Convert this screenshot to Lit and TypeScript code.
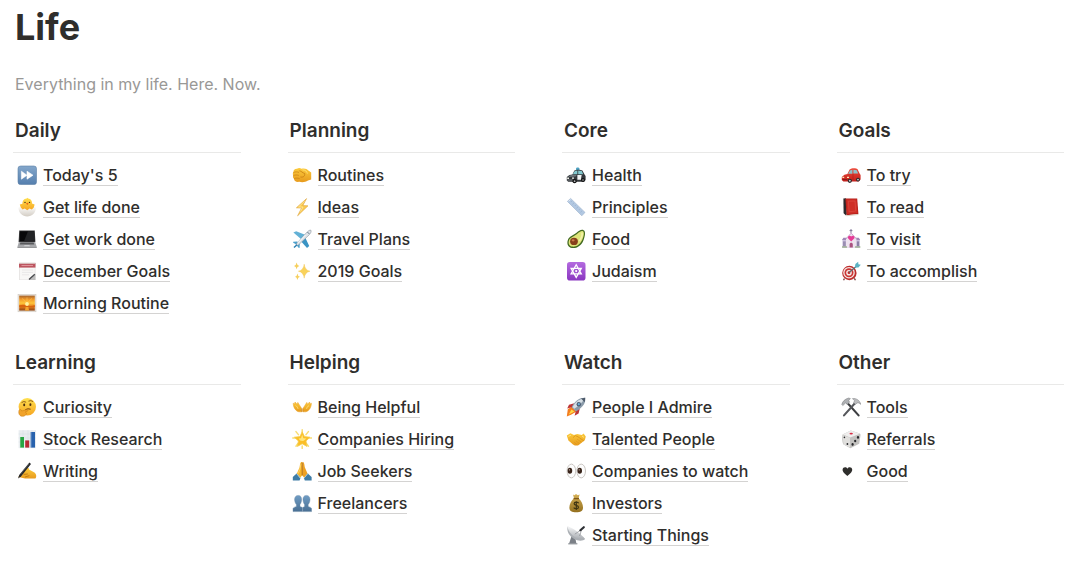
import { LitElement, html, svg, css, type SVGTemplateResult } from "lit";
import { customElement } from "lit/decorators.js";

type Entry = { icon: string; label: string };
type Section = { title: string; entries: Entry[] };

const SECTIONS: Section[] = [
  { title: "Daily", entries: [
    { icon: "forward", label: "Today's 5" },
    { icon: "chick", label: "Get life done" },
    { icon: "laptop", label: "Get work done" },
    { icon: "calendar", label: "December Goals" },
    { icon: "sunrise", label: "Morning Routine" },
  ] },
  { title: "Planning", entries: [
    { icon: "fist", label: "Routines" },
    { icon: "bolt", label: "Ideas" },
    { icon: "plane", label: "Travel Plans" },
    { icon: "sparkles", label: "2019 Goals" },
  ] },
  { title: "Core", entries: [
    { icon: "police", label: "Health" },
    { icon: "ruler", label: "Principles" },
    { icon: "avocado", label: "Food" },
    { icon: "hexagram", label: "Judaism" },
  ] },
  { title: "Goals", entries: [
    { icon: "car", label: "To try" },
    { icon: "book", label: "To read" },
    { icon: "chapel", label: "To visit" },
    { icon: "target", label: "To accomplish" },
  ] },
  { title: "Learning", entries: [
    { icon: "thinking", label: "Curiosity" },
    { icon: "chart", label: "Stock Research" },
    { icon: "writing", label: "Writing" },
  ] },
  { title: "Helping", entries: [
    { icon: "openHands", label: "Being Helpful" },
    { icon: "star", label: "Companies Hiring" },
    { icon: "pray", label: "Job Seekers" },
    { icon: "people", label: "Freelancers" },
  ] },
  { title: "Watch", entries: [
    { icon: "rocket", label: "People I Admire" },
    { icon: "handshake", label: "Talented People" },
    { icon: "eyes", label: "Companies to watch" },
    { icon: "money", label: "Investors" },
    { icon: "dish", label: "Starting Things" },
  ] },
  { title: "Other", entries: [
    { icon: "tools", label: "Tools" },
    { icon: "die", label: "Referrals" },
    { icon: "heart", label: "Good" },
  ] },
];

const gradient = (id: string, ...stops: string[]) => svg`
  <linearGradient id=${id} x1="0" y1="0" x2="0" y2="1">
    ${stops.map((c, i) => svg`<stop offset=${i / (stops.length - 1)} stop-color=${c}></stop>`)}
  </linearGradient>`;

const GRADIENTS = [
  gradient("g-blue", "#84a7cb", "#557fae"),
  gradient("g-yellow", "#ffe04f", "#f6a623"),
  gradient("g-skin", "#fccb3c", "#e79a1d"),
  gradient("g-shell", "#ffffff", "#d3cdc4"),
  gradient("g-sky", "#a5642f", "#f29a2a", "#ffc53a", "#e2781b", "#8d4716"),
  gradient("g-purple", "#b46be0", "#8a36c0"),
  gradient("g-red", "#ef4a3a", "#c2201c"),
  gradient("g-head", "#6f9cc4", "#496f93"),
  gradient("g-metal", "#f5f6f7", "#a9adb2"),
  gradient("g-bag", "#d6b156", "#94701f"),
];

const ICONS: Record<string, SVGTemplateResult> = {
  forward: svg`
    <rect x="1" y="1" width="18.5" height="18.5" rx="2.6" fill="url(#g-blue)" stroke="#5d7fa6" stroke-width=".6"/>
    <path d="M4.4 6.2 10 10.2 4.4 14.2ZM10 6.2 16 10.2 10 14.2Z" fill="#fff" stroke="#fff" stroke-width=".6" stroke-linejoin="round"/>`,
  chick: svg`
    <path d="M1.4 10.6 3.4 9.2 5 10.6 15.5 10.6 17 9.2 18.8 10.8C19 16 15 19.4 10.2 19.4S1.6 16 1.4 10.6Z" fill="url(#g-shell)"/>
    <path d="M9.6 1.4 10.4.8 11.2 1.6C14 2 15.2 4 15 6.6L17.6 7.4 16.8 10.4 14.8 12.6 12.6 11.6 10.2 13.2 7.8 11.6 5.6 12.6 3.8 10.4 2.8 7.4 5.4 6.8C5.2 4 6.6 1.8 9.6 1.4Z" fill="url(#g-yellow)"/>
    <circle cx="8" cy="5.4" r=".7" fill="#3a2b12"/><circle cx="12.5" cy="5.4" r=".7" fill="#3a2b12"/>
    <path d="M9 6.4 10.3 5.8 11.6 6.4 10.3 8Z" fill="#ec6a15"/>`,
  laptop: svg`
    <path d="M2.2 1.4H17.8L18.4 13H1.6Z" fill="#3b3b3d"/>
    <path d="M3 2.2H17L17.5 12.2H2.5Z" fill="#08080a"/>
    <path d="M11 2.2H17L17.5 12.2H7Z" fill="#222326"/>
    <path d="M1.8 13H18.2L19.8 18H.4Z" fill="#a7a8ab"/>
    <path d="M3.4 13.5H16.6L17.3 15.4H2.7Z" fill="#5a5b5e"/>
    <path d="M7.5 16H12.5L12.9 17.3H7.1Z" fill="#cdced0"/>
    <path d="M.4 18H19.8V18.8H.4Z" fill="#7c7d80"/>`,
  calendar: svg`
    <path d="M2 2H18.5V19H2Z" fill="#e4e2e1"/>
    <path d="M2.8 6H17.8V18.5H2.8Z" fill="#f8f7f6"/>
    <path d="M2 2H18.5V6.6H2Z" fill="#bd5560"/>
    <path d="M2 1.6H18.5V2.8H2Z" fill="#ddd2cf"/>
    <path d="M4.5 4.5H16" stroke="#e6a5aa" stroke-width=".8"/>
    <path d="M5 9H16M5 11.4H16M5 13.8H12" stroke="#dfdddd" stroke-width=".6"/>
    <path d="M12.4 18.6C13 15.8 15.5 14.6 18.5 13.2V19H12.4Z" fill="#bdbdbd"/>
    <path d="M12 18.6 17.8 13.2" stroke="#4a4b4f" stroke-width="1.3"/>`,
  sunrise: svg`
    <rect x="1" y="1.4" width="18" height="17.4" fill="#e9e4dd" stroke="#c9c3bb" stroke-width=".5"/>
    <rect x="2.2" y="2.6" width="15.6" height="15" fill="url(#g-sky)"/>
    <path d="M10 10 5 5.4M10 10 15 5.4M10 9V4.4" stroke="#ffc552" stroke-width=".6"/>
    <path d="M2.2 12.3Q6 11 10 12.3T17.8 12V14H2.2Z" fill="#d9640f"/>
    <circle cx="10" cy="11" r="1.9" fill="#fff3a2"/>
    <path d="M8.6 14H11.4L12 17.6H8Z" fill="#f7a32d"/>`,
  fist: svg`
    <path d="M1.4 7C1.2 5 3 3.6 5 3.8 6.4 2.8 8.4 3 9.4 3.8 12.6 2.8 15 4 16.4 5.4L19.2 7.4V14.6L16 15.6C13.4 17.4 9.6 17.6 7.4 16.8 4.4 17.4 1.8 16 2 13.8.8 12.8.8 11 1.2 10.2.6 9.2.8 7.8 1.4 7Z" fill="url(#g-skin)"/>
    <path d="M1.4 7.6C3 6.6 5.4 6.8 7 7.4M1.4 10.6C3 9.8 5 9.8 6.8 10.4M2.2 13.6C4 12.8 5.8 13 7.6 13.6" stroke="#c57c12" stroke-width=".7" fill="none"/>
    <path d="M7.4 5.8C9.4 6 10.4 8 12.6 8.4 13.2 10.8 11.6 12.6 8.4 12" stroke="#c57c12" stroke-width=".8" fill="none"/>
    <path d="M10.4 4.8C13.4 4.8 15 6.6 15.4 8.6" stroke="#ffe079" stroke-width=".9" fill="none"/>`,
  bolt: svg`
    <path d="M14.6 1.6 4.4 10.8 9.6 11 5.6 18.8 16 8.8 10.8 8.6Z" fill="#fbc94d" stroke="#dca33a" stroke-width=".6" stroke-linejoin="round"/>
    <path d="M12.6 4.2 6.6 9.9 11 10.1 8.4 14.6" stroke="#ffeaa0" stroke-width=".8" fill="none"/>`,
  plane: svg`
    <path d="M1.4 3.6 4.2 2.2 13 5.8 9 10Z" fill="#63b1d6"/>
    <path d="M13 8 17.2 17 15 18.9 8.8 12Z" fill="#3a94c4"/>
    <path d="M1.2 12.8 5.2 12.4 7.8 14.8 7.6 18.9 6.2 18.6 4.4 15.6 1.2 13.8Z" fill="#4ba0cc"/>
    <path d="M18.9 1.2C19.6 2.4 18.6 4.4 17 6L6.6 15.8C5 17 3.6 16.8 4.2 15L14 4.2C15.6 2.4 17.8.6 18.9 1.2Z" fill="#dfe4e9" stroke="#8c959e" stroke-width=".6"/>
    <path d="M15.6 3.2 17.2 4.8" stroke="#4f6479" stroke-width="1"/>
    <path d="M5.8 13.8 13.5 6" stroke="#fff" stroke-width=".9"/>
    <path d="M2 18.6 5 15.8" stroke="#287eb2" stroke-width="1.4"/>`,
  sparkles: svg`
    <path d="M12.2 3.2Q12.9 9.2 18 10.2 12.9 11.2 12.2 17.2 11.5 11.2 6.4 10.2 11.5 9.2 12.2 3.2Z" fill="#f9d25a" stroke="#efc04a" stroke-width=".4"/>
    <path d="M4.6 1.6Q5 4.6 7.4 5 5 5.4 4.6 8.2 4.2 5.4 2 5 4.2 4.6 4.6 1.6Z" fill="#f6cf5c"/>
    <path d="M5.4 12.4Q5.8 15.4 8 15.8 5.8 16.2 5.4 19 5 16.2 3 15.8 5 15.4 5.4 12.4Z" fill="#f6cf5c"/>`,
  police: svg`
    <path d="M10 3.6C10 2 13.4 2 13.4 3.6V5H10Z" fill="#4fa3c4"/>
    <path d="M.8 12 3.4 10 6.4 9.4 8.4 5.4C10.4 4.4 14.6 4.4 16.4 5.4L18.4 9.2 19.6 11V15L18 16.8H2.2L.8 15.4Z" fill="#33373b"/>
    <path d="M8.8 6 11.4 5.4V9.2H6.8ZM12.2 5.4 15.8 6 17.2 9.2H12.2Z" fill="#84c9cf"/>
    <path d="M3.6 10.6 6.6 9.8 10.8 10 9.6 11.6 2.4 12Z" fill="#6e757a"/>
    <path d="M11.4 10H15.6L15 14.8H11.4Z" fill="#f3f4f5"/>
    <path d="M1.2 12.6H3V14H1.2ZM6 12.6H8V13.8H6Z" fill="#f0f2ea"/>
    <path d="M1.4 15H6.6" stroke="#9a9da0" stroke-width=".7"/>
    <circle cx="8.6" cy="16.2" r="2.1" fill="#111"/><circle cx="8.6" cy="16.2" r=".9" fill="#b2b4b6"/>
    <circle cx="17" cy="15" r="1.9" fill="#111"/><circle cx="17" cy="15" r=".8" fill="#b2b4b6"/>`,
  ruler: svg`
    <path d="M1.4 4.4 4.6 1.4 19 15.4 15.8 18.8Z" fill="#b2c8e2" stroke="#9bb0cb" stroke-width=".6"/>
    <path d="M2.6 4.3 4.5 2.6" stroke="#e6eff8" stroke-width=".8"/>
    <path d="M6 3.8 4.8 5M8 5.8 6.4 7.4M10 7.8 8.8 9M12 9.8 10.4 11.4M14 11.8 12.8 13M16 13.8 14.4 15.4" stroke="#8fa6c3" stroke-width=".5"/>`,
  avocado: svg`
    <path d="M17.6 1.2C20 2.4 19 7.4 17.4 11.4 15.4 16.6 10.6 19.6 6 19 2 18.4 .6 14.8 1.8 11.2 3 7.2 7.4 6.2 10.2 4 12.6 2 15.4 0 17.6 1.2Z" fill="#426a20"/>
    <path d="M17 2.2C18.6 3.2 17.8 7 16.4 10.4 14.4 15.2 10.4 18 6.4 17.6 3.2 17.2 2 14.4 3 11.4 4 8.4 8.4 7.2 11 5 13.2 3 15.4 1.4 17 2.2Z" fill="#dfe47a"/>
    <path d="M15.8 3.6C16.8 5.4 15 9.6 13.4 12" stroke="#f3f1ac" stroke-width="1.6" fill="none"/>
    <ellipse cx="8" cy="12.4" rx="3.9" ry="3.7" fill="#87401c"/><ellipse cx="7.1" cy="11.3" rx="1.5" ry="1.1" fill="#c97b4b"/>`,
  hexagram: svg`
    <rect x="1" y="1" width="18.5" height="18.5" rx="2.8" fill="url(#g-purple)"/>
    <path d="M10.2 3.8 15.3 12.8H5.1ZM10.2 16.4 5.1 7.4H15.3Z" fill="none" stroke="#fff" stroke-width="1.3"/>
    <circle cx="10.2" cy="10.1" r="1.1" fill="#fff"/>`,
  car: svg`
    <path d="M.8 12 3.4 9.8 6.4 9 8.6 4.6C10.6 3 14.8 3 16.6 4.2L18.6 8.4 19.6 10V14.6L17.6 16.4H2.4L.8 15Z" fill="url(#g-red)"/>
    <path d="M9 5.6 11.4 4.8V8.8H7ZM12.4 4.8 15.8 5.2 17.2 8.6H12.4Z" fill="#8fc0c8"/>
    <path d="M1.4 11.8H3.2V13H1.4ZM6 11.8H8V13H6Z" fill="#ffe9b8"/>
    <path d="M1.4 14.6H6.4" stroke="#7a1a16" stroke-width=".9"/>
    <path d="M12 9V14.8" stroke="#a01a17" stroke-width=".5"/>
    <circle cx="8.8" cy="15.8" r="2.1" fill="#26272a"/><circle cx="8.8" cy="15.8" r="1" fill="#c8cacc"/>
    <circle cx="17" cy="14.6" r="1.9" fill="#26272a"/><circle cx="17" cy="14.6" r=".9" fill="#c8cacc"/>`,
  book: svg`
    <path d="M2.4 1.6 5 1.2 5.8 17 5 18.6 2.6 16.2Z" fill="#2c2a2d"/>
    <path d="M4.4 1.6 16.2 1.4 17.4 17 5.6 18.2Z" fill="#b5211b"/>
    <path d="M5.4 2.4 15.4 2.2 16.6 16 6.4 17Z" fill="#cf2f27"/>
    <path d="M7.4 4.2 14 4 14.8 14 8.2 14.8Z" fill="none" stroke="#dd5146" stroke-width=".6"/>
    <path d="M5.4 18.2 17.4 17V17.9L5.4 19.2Z" fill="#d9cfc2"/>`,
  chapel: svg`
    <path d="M10 0V4.4M8.6 1.6H11.4" stroke="#796c90" stroke-width=".9"/>
    <path d="M1.4 10.6H18.8V18.6H1.4Z" fill="#c9bfdc"/>
    <path d="M1 11 2.4 8.8H7V11ZM13 8.8H17.8L19.2 11H13Z" fill="#9e85b5"/>
    <path d="M5 10 10.2 3.6 15.4 10V18.6H5Z" fill="#eee2ef"/>
    <path d="M4.6 10.2 10.2 4.2 15.8 10.2" stroke="#c79fc9" stroke-width=".9" fill="none"/>
    <path d="M10.2 12.4 7 9.2C6.2 7 9 5.8 10.2 7.6 11.4 5.8 14.2 7 13.4 9.2Z" fill="#e53c96"/>
    <path d="M8.6 18.6V15.4C8.6 13.2 11.8 13.2 11.8 15.4V18.6Z" fill="#a9527f"/>
    <path d="M2.8 12.4V17M4 12.4V17M16.4 12.4V17M17.6 12.4V17" stroke="#736691" stroke-width=".8"/>
    <path d="M1 18H6M14 18H19.4" stroke="#7d9b68" stroke-width="1"/>`,
  target: svg`
    <circle cx="8.4" cy="12" r="7.2" fill="#bd2d2c"/><circle cx="8" cy="11.7" r="5.8" fill="#f3e9e6"/>
    <circle cx="8" cy="11.7" r="4.5" fill="#cd3635"/><circle cx="8" cy="11.7" r="2.8" fill="#f6eeeb"/><circle cx="8" cy="11.7" r="1.4" fill="#c82827"/>
    <path d="M8 11.5 15.8 5" stroke="#5b6970" stroke-width="1.1"/>
    <path d="M13.8 6.4 14.4 3 17.2.8 17.4 3.2 19.8 3.8 17.4 6.4 14.6 6.6Z" fill="#5bb3c4"/>
    <path d="M3.4 17.4 2.6 19.2M13.4 17.4 14.4 19.2" stroke="#6b2c29" stroke-width="1.2"/>`,
  thinking: svg`
    <circle cx="10.3" cy="9.8" r="8.7" fill="url(#g-yellow)"/>
    <ellipse cx="7.2" cy="7.9" rx="1" ry="1.4" fill="#4d3012"/><ellipse cx="13.4" cy="7.7" rx="1" ry="1.4" fill="#4d3012"/>
    <path d="M4.8 5.4Q6.8 3.6 8.8 5M11.8 4Q14 2.8 15.8 4.4" stroke="#885413" stroke-width=".9" fill="none" stroke-linecap="round"/>
    <path d="M8.4 12.6Q11 11.2 13.6 12.2" stroke="#75420d" stroke-width="1" fill="none"/>
    <path d="M2 13.4C2.8 11.8 4.4 12.4 4.6 14L9.8 12.8C11.4 12.6 11.4 14 10 14.4L8.2 15 9.6 16.2C9 19.2 5 20.2 3 18.4 1.6 17.2 1.6 15 2 13.4Z" fill="#f0a22a" stroke="#c77b15" stroke-width=".5"/>`,
  chart: svg`
    <rect x="1.6" y="1.2" width="17.4" height="18" fill="#e9edf0"/>
    <path d="M1.6 5H19M1.6 9H19M1.6 13H19M6 1.2V19M11 1.2V19M15 1.2V19" stroke="#cfd8df" stroke-width=".4"/>
    <path d="M3 8H7V18.6H3Z" fill="#29a544"/><path d="M8.2 11.4H12.2V18.6H8.2Z" fill="#b92a35"/><path d="M13.6 3H18V18.6H13.6Z" fill="#2862ad"/>
    <path d="M3.5 8V18.6M14.2 3V18.6" stroke="#ffffff" stroke-opacity=".3" stroke-width=".8"/>`,
  writing: svg`
    <path d="M6.2 11.6 9.8 7.6C11 6.6 12.4 7.2 12 8.6L17 11.2C19.2 12.4 20 15.6 18.4 17.4L8 17.6 1.6 16C1.4 14.4 3.6 13.6 5 14.2Z" fill="url(#g-skin)"/>
    <path d="M6.6 13.4 10.8 13M8 16 12.4 14.6" stroke="#b7710f" stroke-width=".8" fill="none"/>
    <path d="M1 17.6 2.2 14 12.4 1.6 14 3 4 15.4Z" fill="#26272a"/>
    <path d="M3.4 13.2 11.8 3.2" stroke="#717377" stroke-width=".6"/>`,
  openHands: svg`
    <path d="M1.2 6.2 2.6 7 3 5 5 7.2 5.8 5.4 8.2 9.2C9.8 10.8 10 13 9.8 14.8H6.8C3.4 14 1.2 10 1.2 6.2Z" fill="url(#g-skin)" stroke="#eba52b" stroke-width=".5"/>
    <path d="M19.4 6.2 18 7 17.6 5 15.6 7.2 14.8 5.4 12.4 9.2C10.8 10.8 10.6 13 10.8 14.8H13.8C17.2 14 19.4 10 19.4 6.2Z" fill="url(#g-skin)" stroke="#eba52b" stroke-width=".5"/>
    <path d="M3.6 8.6C4.8 9.2 5.6 10.2 6 11.8M17 8.6C15.8 9.2 15 10.2 14.6 11.8" stroke="#ffe07c" stroke-width=".9" fill="none"/>
    <path d="M9.8 11.4 9.5 14.8M10.8 11.4 11.1 14.8" stroke="#c98520" stroke-width=".6"/>`,
  star: svg`
    <path d="M10.2.8V3.6M4 2.6 6.4 5.6M16.4 2.6 14 5.6M.8 9H4M19.6 9H16.4M4 17.2 5.8 14.6M16.4 17.2 14.6 14.6M10.2 19.4V17" stroke="#f8dd73" stroke-width="1.5" stroke-linecap="round"/>
    <path d="M10.2 2.8 12.5 7.6 18 8.2 14 12 15 17.4 10.2 14.8 5.4 17.4 6.4 12 2.4 8.2 7.9 7.6Z" fill="#fbbe25" stroke="#f5cc4b" stroke-width=".8" stroke-linejoin="round"/>
    <path d="M10.2 5.6 11.4 9.2 14.4 9.6 11.8 11.8 10.2 12 8 11.4 6.6 9.6 9 9.2Z" fill="#ffe57a"/>`,
  pray: svg`
    <path d="M10 1C8.2.6 8 3.6 7.6 6.2L4.8 12.8 7.8 17.2 10.2 14.2Z" fill="#f6b52d"/>
    <path d="M10.4 1C12.2.6 12.4 3.6 12.8 6.2L15.6 12.8 12.6 17.2 10.2 14.2Z" fill="#eda124"/>
    <path d="M10.2 1.6V14.4" stroke="#a8640e" stroke-width=".9"/>
    <path d="M8.9 3.2 7.9 8.4 6.2 12.6" stroke="#ffdc72" stroke-width=".8" fill="none"/>
    <path d="M4.6 12.6 8.4 17.2 7.6 19.4H.8V16Z" fill="#3e7ca6"/><path d="M15.8 12.6 12 17.2 12.8 19.4H19.6V16Z" fill="#3e7ca6"/>
    <path d="M4.6 12.6 8.4 17.2M15.8 12.6 12 17.2" stroke="#a4cade" stroke-width="1"/>`,
  people: svg`
    <path d="M6.2 2.4C9 2.4 9.8 4.6 9.6 7 9.4 9.6 8.4 11 8 11.6V13.4L10.4 14.6V18.6H1V15.6C1.2 14.4 3 14 4.4 13.4V11.6C3.6 10.8 2.8 9 2.6 7 2.4 4.4 3.6 2.4 6.2 2.4Z" fill="url(#g-head)" stroke="#6485a4" stroke-width=".4"/>
    <path d="M14.4 2.4C11.6 2.4 10.8 4.6 11 7 11.2 9.6 12.2 11 12.6 11.6V13.4L10.8 14.6V18.6H19.6V15.6C19.4 14.4 17.6 14 16.2 13.4V11.6C17 10.8 17.8 9 18 7 18.2 4.4 17 2.4 14.4 2.4Z" fill="url(#g-head)" stroke="#6485a4" stroke-width=".4"/>`,
  rocket: svg`
    <path d="M5.6 9.8 1.8 12.2.8 19.4 5 17.8 10.6 14.6Z" fill="#f47e20"/>
    <path d="M5.4 12.4 2.8 17.4 8.4 14.6Z" fill="#ffda45"/>
    <path d="M8.4 6.2 3 7.8 1.2 11.6 6.6 10ZM13.8 11.4 12.6 16.6 8.6 18.8 10 13.2Z" fill="#be3537"/>
    <path d="M19.2.8C19.8 5.4 17.6 10 10 14.4L5.6 10C9.4 3.4 14 .4 19.2.8Z" fill="#8b9baa"/>
    <path d="M18.6 1.2C14 1.4 9.8 4.4 6.6 10L8.4 11.8C12.4 9 16.8 5.4 18.6 1.2Z" fill="#d7dfe5"/>
    <path d="M15 1.4 18.8 5.2 19.2.8Z" fill="#4c5969"/>
    <circle cx="12.8" cy="7.2" r="2.2" fill="#495d73"/><circle cx="12.8" cy="7.2" r="1.1" fill="#6db2dc"/>`,
  handshake: svg`
    <path d="M.8 6.6 4.4 4.2 8 6 11.2 5 15.8 6 17.6 4.6 19.8 7.4 18.8 11.2 12.4 16.2C11 17 8.8 16.6 7 15.4L2.4 11.6Z" fill="url(#g-skin)"/>
    <path d="M7 8.6 9.4 6.6 12 7.8 18 12" stroke="#d8921a" stroke-width=".8" fill="none"/>
    <path d="M11 10 15.4 13.2M9.8 11.8 13.4 14.6M8.2 13.2 10.8 15.6" stroke="#d8921a" stroke-width=".6"/>
    <path d="M2.4 7.4 5 6.2M16 7 18 8.4" stroke="#ffe27b" stroke-width="1"/>`,
  eyes: svg`
    <ellipse cx="5.4" cy="10" rx="4.3" ry="6.9" fill="#fcfcfc" stroke="#bcb7b2" stroke-width=".8"/>
    <ellipse cx="15.2" cy="10" rx="4.3" ry="6.9" fill="#fcfcfc" stroke="#bcb7b2" stroke-width=".8"/>
    <ellipse cx="3.9" cy="9.8" rx="2.3" ry="3" fill="#382319"/><ellipse cx="13.7" cy="9.8" rx="2.3" ry="3" fill="#382319"/>
    <circle cx="3.4" cy="8.8" r=".6" fill="#d9cdc4"/><circle cx="13.2" cy="8.8" r=".6" fill="#d9cdc4"/>`,
  money: svg`
    <path d="M7 1.6 8.4 2.2 10 1 11.8 2.2 13.6 1.6 12.6 5.2C15.4 7.6 17.2 11.4 17 15 16.8 18.2 14.6 19.2 10.2 19.2S3.6 18.2 3.4 15C3.2 11.4 5.2 7.6 8 5.2Z" fill="url(#g-bag)"/>
    <path d="M7.6 5.6H13" stroke="#815817" stroke-width="1.3"/>
    <path d="M12.7 10.2C11.8 8.8 8.2 8.8 8.1 10.7 8 12.7 12.6 12 12.5 14.2 12.4 16.2 8.8 16.2 7.7 14.6M10.3 8.2V17" stroke="#403512" stroke-width="1.2" fill="none"/>`,
  dish: svg`
    <path d="M5.6 11 3 18.8H10.4L9.4 13.4Z" fill="#7b8087"/><path d="M2.2 18.2H11.4V19.4H2.2Z" fill="#92969b"/>
    <path d="M1.8 1.6C.2 6 3.4 11.6 8.2 14 12.6 16.4 17.4 16 19 14Z" fill="#abafb4"/>
    <path d="M1.8 1.6C5.4 1.8 16.6 10.2 19 14 14.6 15 9 12.8 6.2 10 3 7 1.4 4 1.8 1.6Z" fill="url(#g-metal)"/>
    <path d="M8.8 9.2 15.4 4.6M13.6 11 15.6 4.6" stroke="#8a8d91" stroke-width=".7"/>
    <path d="M14.4 5.2 17.8 2.2" stroke="#2e3034" stroke-width="2.2" stroke-linecap="round"/>`,
  tools: svg`
    <path d="M5.8 5.2 17.6 18.4" stroke="#3d3e41" stroke-width="2.1" stroke-linecap="round"/>
    <path d="M14.8 5.2 3 18.4" stroke="#55575b" stroke-width="2.1" stroke-linecap="round"/>
    <path d="M.8 7.6C1.2 4.8 3.8 2 7.6 1L9.4 1.6 7.8 3.4 8.6 5.2 6.2 7.4 4.6 6 1.8 8.6Z" fill="#aeb0b3" stroke="#797b7e" stroke-width=".5"/>
    <path d="M11.4 1.6C15.4 1 18.8 3.4 19.8 7.4 18 5.8 17 5.6 15.8 6.2L14.4 7.4 12.6 5.4 13.6 3.8Z" fill="#bbbcbe" stroke="#797b7e" stroke-width=".5"/>`,
  die: svg`
    <path d="M1.6 5.6 9.8 1.4 18.8 4.6C19.6 5 19.6 6 19.4 7L18.2 14.8 9.4 19.2 2.6 15.6C1.2 14.8.8 6.6 1.6 5.6Z" fill="#c2c1bf"/>
    <path d="M1.8 5.6 9.8 1.4 19 4.8 9.2 8.6Z" fill="#efeeed"/>
    <path d="M1.4 6 9 8.8 9.2 18.8 2.6 15.6Z" fill="#e0dfdd"/>
    <ellipse cx="10.2" cy="4.6" rx="1.7" ry=".9" fill="#d72c45"/>
    <g fill="#26272a"><circle cx="3.4" cy="8.4" r=".8"/><circle cx="6.4" cy="15" r=".9"/><ellipse cx="11.6" cy="15.4" rx="1.1" ry="1.3"/><ellipse cx="14.2" cy="12" rx="1.1" ry="1.3"/><ellipse cx="17" cy="8.4" rx="1.1" ry="1.3"/></g>`,
  heart: svg`
    <path d="M6.4 15C4.2 13 1.4 11.2 1.6 8.6 1.8 6 5.2 5.4 6.4 7.8 7.6 5.4 11 6 11.2 8.6 11.4 11.2 8.6 13 6.4 15Z" fill="#2f2e2c"/>`,
};

@customElement("app-root")
export class AppRoot extends LitElement {
  static styles = css`
    :host {
      display: block;
      box-sizing: border-box;
      min-height: 100vh;
      padding: 4px 21px 16px 13px;
      background: #fff;
      color: #2f2e2c;
      font-family: Inter, "Liberation Sans", sans-serif;
    }
    .defs {
      position: absolute;
    }
    h1, h2, p, ul {
      margin: 0;
      padding: 0;
    }
    .title {
      padding-left: 2px;
      font-size: 36px;
      line-height: 46px;
      font-weight: 700;
    }
    .lead {
      margin-top: 22px;
      padding-left: 2px;
      font-size: 16px;
      line-height: 24px;
      color: #999896;
    }
    .grid {
      display: grid;
      grid-template-columns: repeat(4, minmax(0, 1fr));
      gap: 30px 47px;
      margin-top: 21px;
    }
    .heading {
      padding: 0 2px 7px;
      border-bottom: 1px solid #e9e9e8;
      font-size: 19px;
      line-height: 28px;
      font-weight: 600;
    }
    .list {
      list-style: none;
      padding-top: 6px;
    }
    .item {
      display: flex;
      align-items: center;
      gap: 6px;
      height: 32px;
      padding-left: 4px;
    }
    .icon {
      flex: none;
      width: 20px;
      height: 20px;
    }
    .link {
      border-bottom: 1px solid #d4d3d2;
      color: inherit;
      font-size: 16px;
      line-height: 20px;
      font-weight: 500;
      text-decoration: none;
      white-space: nowrap;
    }
  `;

  render() {
    return html`
      <svg class="defs" width="0" height="0" aria-hidden="true"><defs>${GRADIENTS}</defs></svg>
      <header>
        <h1 class="title">Life</h1>
        <p class="lead">Everything in my life. Here. Now.</p>
      </header>
      <main class="grid">
        ${SECTIONS.map((section) => html`
          <section>
            <h2 class="heading">${section.title}</h2>
            <ul class="list">
              ${section.entries.map((entry) => html`
                <li class="item">
                  <svg class="icon" viewBox="0 0 20 20" aria-hidden="true">${ICONS[entry.icon]}</svg>
                  <a class="link" href="#">${entry.label}</a>
                </li>`)}
            </ul>
          </section>`)}
      </main>
    `;
  }
}
